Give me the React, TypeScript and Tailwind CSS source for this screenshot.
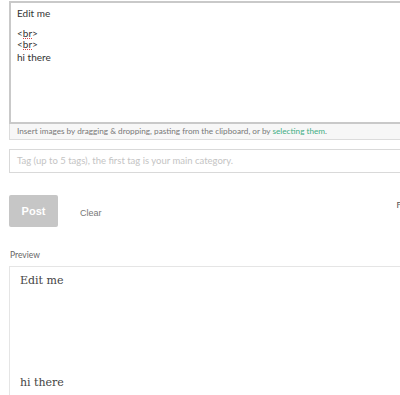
import React from "react";

export default function App() {
  return (
    <div className="w-[400px] h-[395px] overflow-hidden bg-white font-['Lato',sans-serif]">
      <div className="pl-[9px] pt-px">
        {/* Editor */}
        <div className="w-[420px] h-[123px] border-2 border-[#c9c9c9] border-r-0 px-[6px] pt-[5px] text-[10px] leading-[11px] text-[#333]">
          <div>Edit me</div>
          <div className="h-[9px]" />
          <div>
            &lt;<span className="inline-block leading-[10px] border-b border-dotted border-[#d84848]">br</span>&gt;
          </div>
          <div>
            &lt;<span className="inline-block leading-[10px] border-b border-dotted border-[#d84848]">br</span>&gt;
          </div>
          <div className="mt-[2px]">hi there</div>
        </div>
        <div className="w-[420px] h-[16px] border border-t-0 border-[#dcdcdc] bg-[#f7f7f7] pl-[7px] text-[8.2px] leading-[15px] text-[#777]">
          Insert images by dragging &amp; dropping, pasting from the clipboard, or by{" "}
          <span className="text-[#3fae84]">selecting them</span>.
        </div>

        {/* Tag input */}
        <div className="mt-[9px] w-[420px] h-[24px] border border-[#d9d9d9] pl-[7px] text-[9.5px] leading-[22px] text-[#c4c4c4]">
          Tag (up to 5 tags), the first tag is your main category.
        </div>

        {/* Actions */}
        <div className="mt-[22px] flex items-center relative w-[391px]">
          <div className="w-[49px] h-[32px] bg-[#c6c6c6] rounded-[2px] flex items-center justify-center text-white font-bold text-[11px] font-['Liberation_Sans',sans-serif]">
            Post
          </div>
          <div className="ml-[22px] mt-[6px] text-[9px] text-[#777] font-['Liberation_Sans',sans-serif]">Clear</div>
          <div className="absolute right-[-3px] top-[4px] text-[9px] text-[#555] font-['Liberation_Sans',sans-serif]">R</div>
        </div>

        {/* Preview */}
        <div className="mt-[22px] text-[8.5px] text-[#666] pl-px">Preview</div>
        <div className="mt-[4px] w-[420px] h-[140px] border border-[#e5e5e5] pl-[10px] pt-[6px] font-['DejaVu_Serif',serif] text-[11px] text-[#444] flex flex-col">
          <div>Edit me</div>
          <div className="mt-[86px]">hi there</div>
        </div>
      </div>
    </div>
  );
}
